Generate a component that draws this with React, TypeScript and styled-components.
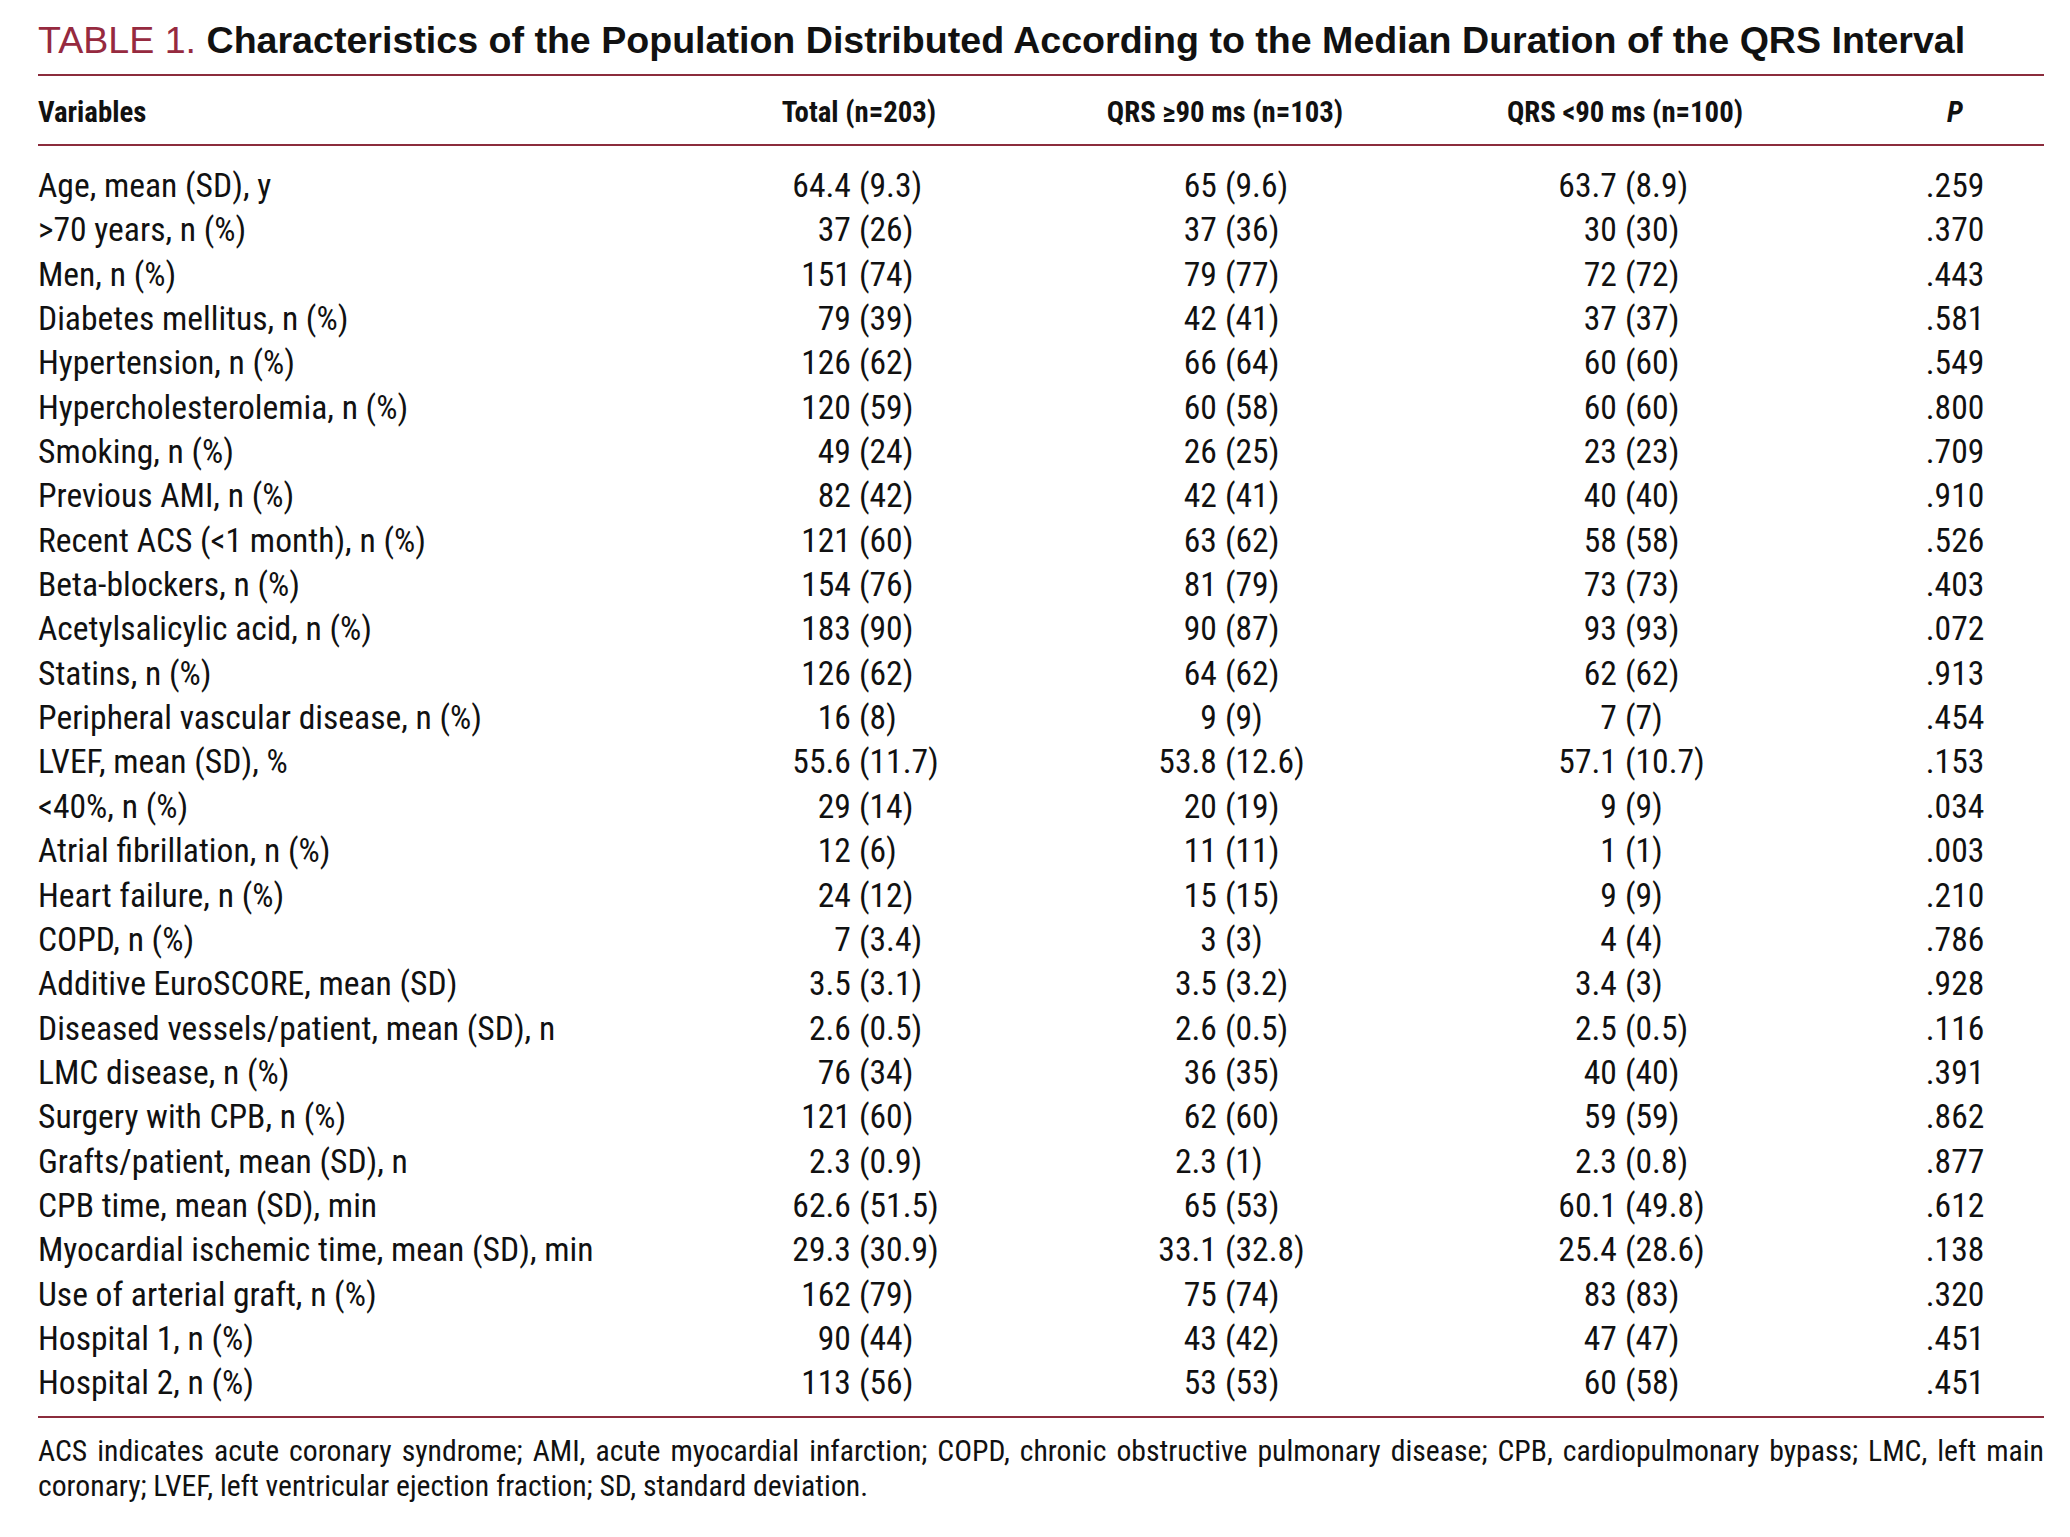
import React from "react";
import styled, { createGlobalStyle } from "styled-components";

const GlobalStyle = createGlobalStyle`
  html, body {
    margin: 0;
    padding: 0;
    background: #ffffff;
  }
  body {
    font-family: Roboto, "Liberation Sans", Arial, sans-serif;
    color: #111111;
  }
`;

const RULE = "#8b2c3c";
const COLS = "622px 398px 334px 466px 186px";

const Page = styled.div`
  width: 2006px;
  padding: 18px 0 40px 38px;
`;

const Title = styled.h1`
  margin: 0;
  font-family: "Liberation Sans", Arial, sans-serif;
  font-size: 37.6px;
  line-height: 44px;
  font-weight: 700;
  color: #111111;
  white-space: nowrap;
`;

const TitleLabel = styled.span`
  font-weight: 400;
  color: #962a3f;
`;

const Table = styled.div`
  margin-top: 12px;
  border-top: 2px solid ${RULE};
  border-bottom: 2px solid ${RULE};
  font-family: Roboto, "Liberation Sans", Arial, sans-serif;
  font-stretch: 75%;
`;

const HeaderRow = styled.div`
  display: grid;
  grid-template-columns: ${COLS};
  padding-top: 4px;
  height: 64px;
  line-height: 64px;
  border-bottom: 2px solid ${RULE};
  font-size: 28.8px;
  font-weight: 700;
  white-space: nowrap;
`;

const HeadCell = styled.div<{ $align?: "left" | "center"; $shift?: number }>`
  text-align: ${(p) => p.$align ?? "center"};
  padding-left: ${(p) => p.$shift ?? 0}px;
`;

const Italic = styled.span`
  font-style: italic;
`;

const Body = styled.div`
  padding: 18px 0 10.2px;
`;

const Row = styled.div`
  display: grid;
  grid-template-columns: ${COLS};
  height: 44.35px;
  line-height: 44.35px;
  font-size: 33.6px;
  white-space: nowrap;
`;

const Label = styled.div`
  text-align: left;
`;

const Value = styled.div`
  display: grid;
  grid-template-columns: 1fr 1fr;
`;

const ValueLead = styled.span`
  text-align: right;
  padding-right: 0.24em;
`;

const ValueParen = styled.span`
  text-align: left;
`;

const PCell = styled.div`
  text-align: center;
  padding-left: 8px;
`;

const Footnote = styled.div`
  margin-top: 15px;
  font-family: Roboto, "Liberation Sans", Arial, sans-serif;
  font-stretch: 75%;
  font-size: 29.7px;
  line-height: 35px;
  color: #111111;
`;

const FootLine = styled.div<{ $justify?: boolean }>`
  white-space: ${(p) => (p.$justify ? "normal" : "nowrap")};
  text-align: ${(p) => (p.$justify ? "justify" : "left")};
  text-align-last: ${(p) => (p.$justify ? "justify" : "left")};
`;

type RowData = [string, string, string, string, string];

const rows: RowData[] = [
  ["Age, mean (SD), y", "64.4 (9.3)", "65 (9.6)", "63.7 (8.9)", ".259"],
  [">70 years, n (%)", "37 (26)", "37 (36)", "30 (30)", ".370"],
  ["Men, n (%)", "151 (74)", "79 (77)", "72 (72)", ".443"],
  ["Diabetes mellitus, n (%)", "79 (39)", "42 (41)", "37 (37)", ".581"],
  ["Hypertension, n (%)", "126 (62)", "66 (64)", "60 (60)", ".549"],
  ["Hypercholesterolemia, n (%)", "120 (59)", "60 (58)", "60 (60)", ".800"],
  ["Smoking, n (%)", "49 (24)", "26 (25)", "23 (23)", ".709"],
  ["Previous AMI, n (%)", "82 (42)", "42 (41)", "40 (40)", ".910"],
  ["Recent ACS (<1 month), n (%)", "121 (60)", "63 (62)", "58 (58)", ".526"],
  ["Beta-blockers, n (%)", "154 (76)", "81 (79)", "73 (73)", ".403"],
  ["Acetylsalicylic acid, n (%)", "183 (90)", "90 (87)", "93 (93)", ".072"],
  ["Statins, n (%)", "126 (62)", "64 (62)", "62 (62)", ".913"],
  ["Peripheral vascular disease, n (%)", "16 (8)", "9 (9)", "7 (7)", ".454"],
  ["LVEF, mean (SD), %", "55.6 (11.7)", "53.8 (12.6)", "57.1 (10.7)", ".153"],
  ["<40%, n (%)", "29 (14)", "20 (19)", "9 (9)", ".034"],
  ["Atrial fibrillation, n (%)", "12 (6)", "11 (11)", "1 (1)", ".003"],
  ["Heart failure, n (%)", "24 (12)", "15 (15)", "9 (9)", ".210"],
  ["COPD, n (%)", "7 (3.4)", "3 (3)", "4 (4)", ".786"],
  ["Additive EuroSCORE, mean (SD)", "3.5 (3.1)", "3.5 (3.2)", "3.4 (3)", ".928"],
  ["Diseased vessels/patient, mean (SD), n", "2.6 (0.5)", "2.6 (0.5)", "2.5 (0.5)", ".116"],
  ["LMC disease, n (%)", "76 (34)", "36 (35)", "40 (40)", ".391"],
  ["Surgery with CPB, n (%)", "121 (60)", "62 (60)", "59 (59)", ".862"],
  ["Grafts/patient, mean (SD), n", "2.3 (0.9)", "2.3 (1)", "2.3 (0.8)", ".877"],
  ["CPB time, mean (SD), min", "62.6 (51.5)", "65 (53)", "60.1 (49.8)", ".612"],
  ["Myocardial ischemic time, mean (SD), min", "29.3 (30.9)", "33.1 (32.8)", "25.4 (28.6)", ".138"],
  ["Use of arterial graft, n (%)", "162 (79)", "75 (74)", "83 (83)", ".320"],
  ["Hospital 1, n (%)", "90 (44)", "43 (42)", "47 (47)", ".451"],
  ["Hospital 2, n (%)", "113 (56)", "53 (53)", "60 (58)", ".451"],
];

function ValueCell({ text }: { text: string }) {
  const i = text.indexOf(" (");
  const lead = i >= 0 ? text.slice(0, i) : text;
  const paren = i >= 0 ? text.slice(i + 1) : "";
  return (
    <Value>
      <ValueLead>{lead}</ValueLead>
      <ValueParen>{paren}</ValueParen>
    </Value>
  );
}

export default function App() {
  return (
    <>
      <GlobalStyle />
      <Page>
        <Title>
          <TitleLabel>TABLE 1.</TitleLabel> Characteristics of the Population
          Distributed According to the Median Duration of the QRS Interval
        </Title>
        <Table>
          <HeaderRow>
            <HeadCell $align="left">Variables</HeadCell>
            <HeadCell>Total (n=203)</HeadCell>
            <HeadCell>QRS ≥90 ms (n=103)</HeadCell>
            <HeadCell>QRS &lt;90 ms (n=100)</HeadCell>
            <HeadCell $shift={8}>
              <Italic>P</Italic>
            </HeadCell>
          </HeaderRow>
          <Body>
            {rows.map((r) => (
              <Row key={r[0]}>
                <Label>{r[0]}</Label>
                <ValueCell text={r[1]} />
                <ValueCell text={r[2]} />
                <ValueCell text={r[3]} />
                <PCell>{r[4]}</PCell>
              </Row>
            ))}
          </Body>
        </Table>
        <Footnote>
          <FootLine $justify>
            ACS indicates acute coronary syndrome; AMI, acute myocardial
            infarction; COPD, chronic obstructive pulmonary disease; CPB,
            cardiopulmonary bypass; LMC, left main
          </FootLine>
          <FootLine>
            coronary; LVEF, left ventricular ejection fraction; SD, standard
            deviation.
          </FootLine>
        </Footnote>
      </Page>
    </>
  );
}
